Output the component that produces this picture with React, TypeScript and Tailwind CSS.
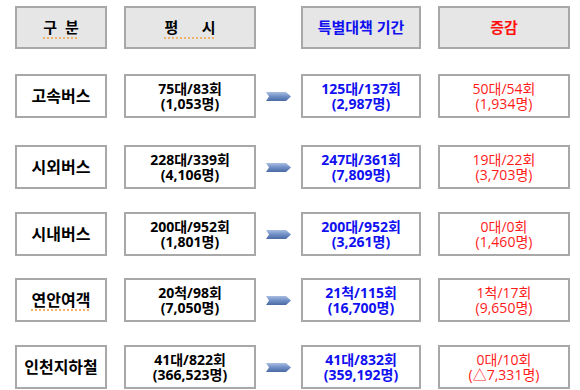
import React from 'react';

interface Row {
  name: string;
  normal: [string, string];
  special: [string, string];
  diff: [string, string];
  gap: string;
  nameUnderline?: boolean;
}

const ROWS: Row[] = [
  { name: '고속버스', normal: ['75대/83회', '(1,053명)'], special: ['125대/137회', '(2,987명)'], diff: ['50대/54회', '(1,934명)'], gap: 'mt-[25px]' },
  { name: '시외버스', normal: ['228대/339회', '(4,106명)'], special: ['247대/361회', '(7,809명)'], diff: ['19대/22회', '(3,703명)'], gap: 'mt-[27px]' },
  { name: '시내버스', normal: ['200대/952회', '(1,801명)'], special: ['200대/952회', '(3,261명)'], diff: ['0대/0회', '(1,460명)'], gap: 'mt-[23px]' },
  { name: '연안여객', normal: ['20척/98회', '(7,050명)'], special: ['21척/115회', '(16,700명)'], diff: ['1척/17회', '(9,650명)'], gap: 'mt-[22px]', nameUnderline: true },
  { name: '인천지하철', normal: ['41대/822회', '(366,523명)'], special: ['41대/832회', '(359,192명)'], diff: ['0대/10회', '(△7,331명)'], gap: 'mt-[23px]' },
];

const font = { fontFamily: '"Open Sans", "Noto Sans CJK KR", sans-serif' };

const Arrow = () => (
  <svg width="26" height="11" viewBox="0 0 26 11">
    <defs>
      <linearGradient id="arr" x1="0" y1="0" x2="0" y2="1">
        <stop offset="0" stopColor="#a9bde0" />
        <stop offset="0.5" stopColor="#6f8ec6" />
        <stop offset="1" stopColor="#4a6aa4" />
      </linearGradient>
    </defs>
    <polygon points="0,1 20,1 25,5.5 20,10 0,10 3,5.5" fill="url(#arr)" />
  </svg>
);

const Cell: React.FC<{ className?: string; children: React.ReactNode }> = ({ className = '', children }) => (
  <div className={`h-[44px] border-2 border-[#a8a8a8] bg-white flex flex-col items-center justify-center text-[14px] leading-[15px] ${className}`}>
    {children}
  </div>
);

const dotted = 'underline decoration-dotted decoration-[#f0a040] underline-offset-4';

export default function App() {
  return (
    <div className="w-[580px] h-[390px] bg-white overflow-hidden pt-[6px]" style={font}>
      {/* Header */}
      <div className="flex items-center">
        <div className="ml-[15px] w-[92px] h-[43px] border-2 border-[#a8a8a8] bg-[#e6e6e6] flex items-center justify-center text-[15px] font-bold text-black">
          <span className={`whitespace-pre ${dotted}`}>구  분</span>
        </div>
        <div className="ml-[17px] w-[132px] h-[43px] border-2 border-[#a8a8a8] bg-[#e6e6e6] flex items-center justify-center text-[15px] font-bold text-black">
          <span className={`whitespace-pre ${dotted}`}>평      시</span>
        </div>
        <div className="ml-[45px] w-[120px] h-[43px] border-2 border-[#a8a8a8] bg-[#e6e6e6] flex items-center justify-center text-[15px] font-bold text-[#1010f0]">
          특별대책 기간
        </div>
        <div className="ml-[17px] w-[132px] h-[43px] border-2 border-[#a8a8a8] bg-[#e6e6e6] flex items-center justify-center text-[15px] font-bold text-[#ff1010]">
          증감
        </div>
      </div>

      {/* Rows */}
      {ROWS.map(row => (
        <div key={row.name} className={`flex items-center ${row.gap}`}>
          <Cell className="ml-[15px] w-[92px] text-[16px] font-bold text-black">
            <span className={row.nameUnderline ? dotted : ''}>{row.name}</span>
          </Cell>
          <Cell className="ml-[17px] w-[132px] font-bold text-black">
            <span>{row.normal[0]}</span>
            <span>{row.normal[1]}</span>
          </Cell>
          <div className="w-[45px] flex justify-center">
            <Arrow />
          </div>
          <Cell className="w-[120px] font-bold text-[#1010f0]">
            <span>{row.special[0]}</span>
            <span>{row.special[1]}</span>
          </Cell>
          <Cell className="ml-[17px] w-[132px] text-[#ff1a1a]">
            <span>{row.diff[0]}</span>
            <span>{row.diff[1]}</span>
          </Cell>
        </div>
      ))}
    </div>
  );
}
